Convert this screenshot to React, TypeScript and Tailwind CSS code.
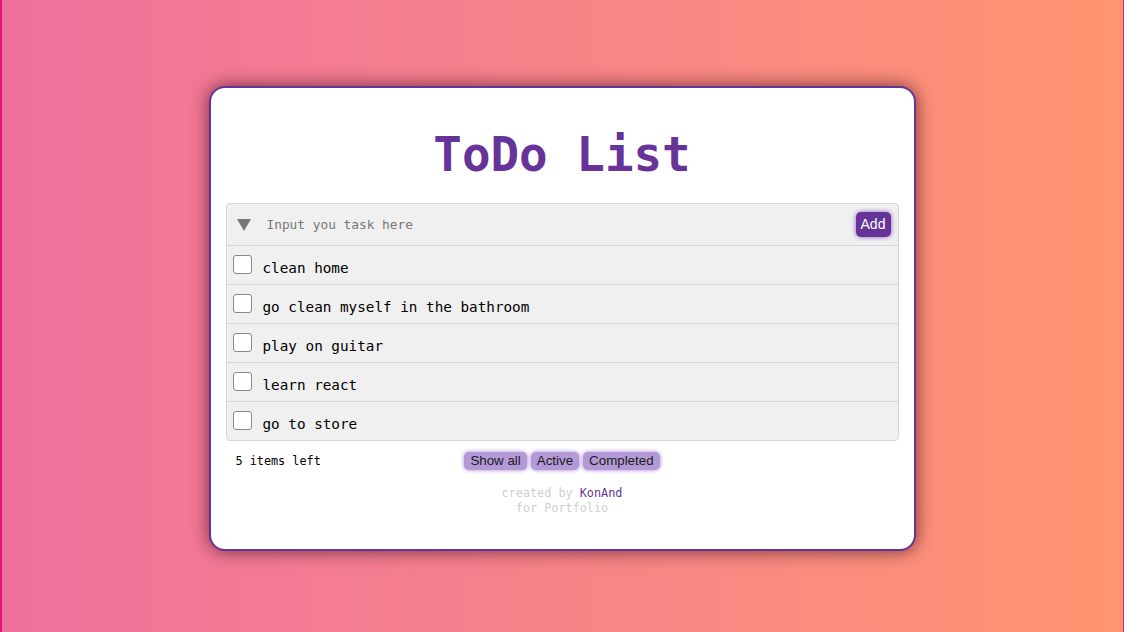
import React from "react";

const tasks = [
  "clean home",
  "go clean myself in the bathroom",
  "play on guitar",
  "learn react",
  "go to store",
];

const mono = "font-['DejaVu_Sans_Mono',monospace]";

function TaskRow({ text }: { text: string }) {
  return (
    <li className="flex h-[39px] items-center border-t border-[#d6d6d6] pl-[6px]">
      <span className="mb-[2px] h-[19px] w-[19px] shrink-0 rounded-[3px] border border-[#8a8a8a] bg-white" />
      <span className={`${mono} ml-[11px] mt-[7px] text-[14.3px] text-black`}>{text}</span>
    </li>
  );
}

function FilterButton({ label }: { label: string }) {
  return (
    <button className="h-[18px] rounded-[5px] bg-[#b39ad6] px-[6px] font-['Liberation_Sans',Arial,sans-serif] text-[13.33px] leading-none text-[#1b1b1b] shadow-[0_0_4px_#a27ed8]">
      {label}
    </button>
  );
}

export default function App() {
  return (
    <div className="flex h-[632px] items-center justify-center border-l-2 border-r border-[#e0187b] bg-gradient-to-r from-[#f0709d] to-[#ff9570]">
      <div className="ml-[-1px] mt-[4px] flex h-[465px] w-[707px] flex-col rounded-[16px] border-2 border-[#663399] bg-white px-[15px] pt-[43px] shadow-[0_0_18px_rgba(40,0,20,0.65)]">
        <h1 className={`${mono} text-center text-[47.5px] font-bold leading-none text-[#663399]`}>ToDo List</h1>

        <div className="mt-[25px] overflow-hidden rounded-[4px] border border-[#d6d6d6] bg-[#f0f0f0]">
          <div className="flex h-[41px] items-center pl-[10px] pr-[7px]">
            <svg width="14" height="12" viewBox="0 0 14 12" className="mt-[1px] shrink-0">
              <path d="M0 0 H14 L7 12 Z" fill="#777" />
            </svg>
            <input
              className={`${mono} ml-[16px] flex-1 bg-transparent text-[12.8px] text-[#777] outline-none placeholder:text-[#777]`}
              placeholder="Input you task here"
            />
            <button className="h-[25px] w-[35px] rounded-[5px] bg-[#663399] font-['Liberation_Sans',Arial,sans-serif] text-[14px] text-white shadow-[0_0_5px_#8a5cc4]">
              Add
            </button>
          </div>
          <ul>
            {tasks.map((t) => (
              <TaskRow key={t} text={t} />
            ))}
          </ul>
        </div>

        <div className="mt-[10px] grid grid-cols-3 items-center">
          <span className={`${mono} mt-[2px] pl-[10px] text-[11.8px] text-black`}>5 items left</span>
          <div className="flex justify-center gap-[4px]">
            <FilterButton label="Show all" />
            <FilterButton label="Active" />
            <FilterButton label="Completed" />
          </div>
        </div>

        <div className={`${mono} mt-[15px] text-center text-[11.8px] leading-[15px] text-[#cfcfcf]`}>
          <p>
            created by <span className="text-[#663399]">KonAnd</span>
          </p>
          <p>for Portfolio</p>
        </div>
      </div>
    </div>
  );
}
